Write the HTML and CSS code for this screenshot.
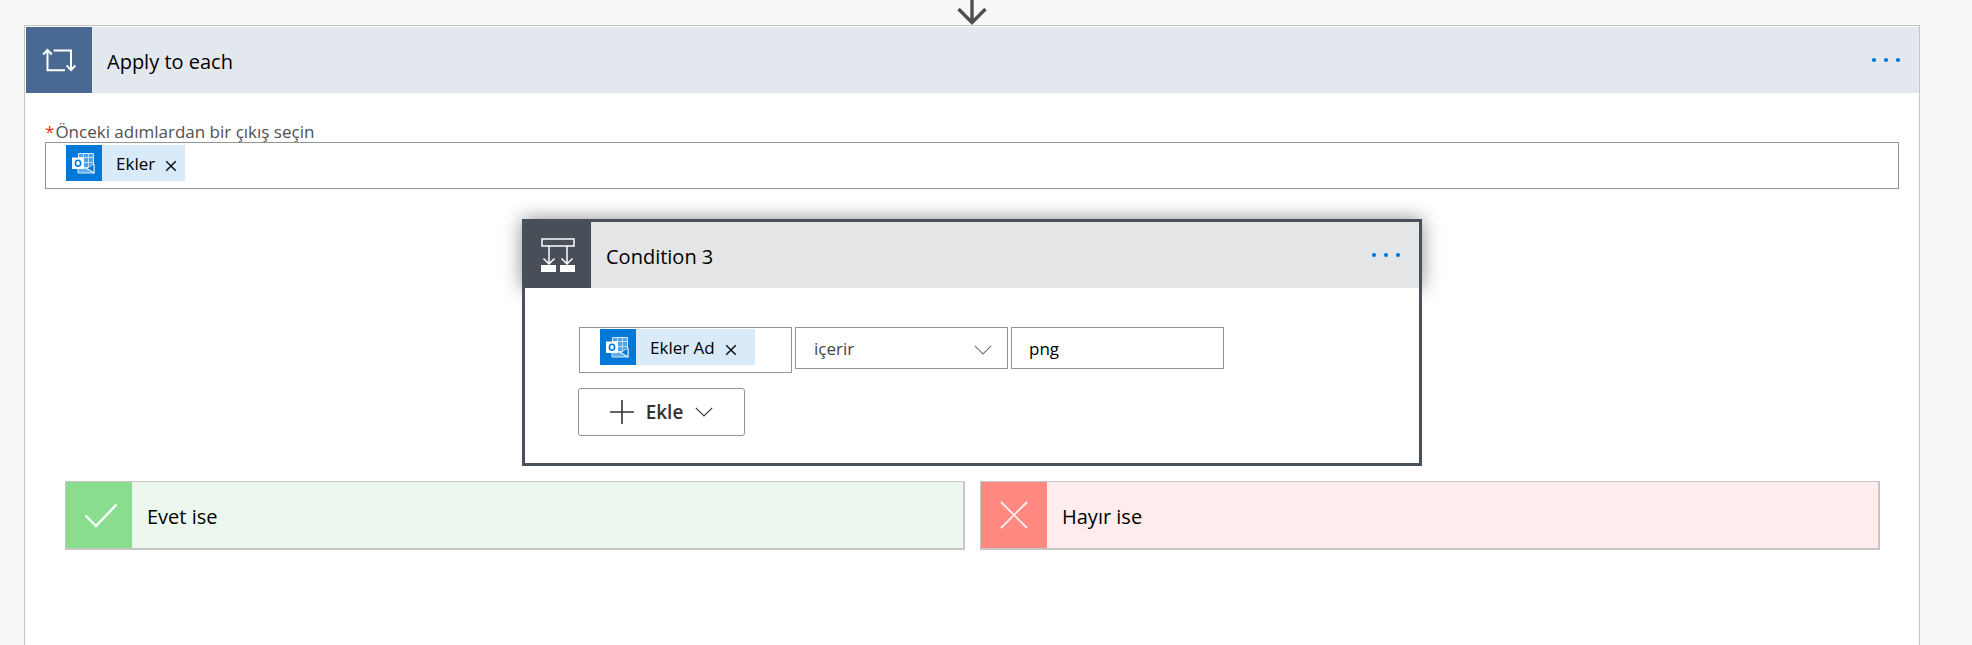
FILE: index.html
```html
<!DOCTYPE html>
<html lang="tr">
<head>
<meta charset="utf-8">
<title>Apply to each</title>
<link rel="stylesheet" href="styles.css">
</head>
<body>
<svg class="defs" aria-hidden="true">
  <symbol id="outlook" viewBox="0 0 36 36">
    <path d="M12.500 8.500h15v14h-15z" fill="#4fa3e6" stroke="#d6ebfb"/>
    <path d="M17.500 9v13M22.500 9v13M13 12.500h14M13 17.500h14" stroke="#b9dcf7" stroke-width="1"/>
    <path d="M12 19.500l8.500 4.500 7.500-5v9H12z" fill="#5fade9" stroke="#d6ebfb"/>
    <path d="M21.500 23.500l6.500-4v7.500z" fill="#0078d7"/>
    <path d="M19 22.500l9 5.500V19" fill="none" stroke="#d6ebfb" stroke-width="1.100"/>
    <path d="M6 12.500h12v11.500H6z" fill="#fff"/>
    <ellipse cx="12" cy="18.200" rx="2.600" ry="3" fill="none" stroke="#0078d7" stroke-width="1.600"/>
  </symbol>
  <symbol id="chevron" viewBox="0 0 18 10">
    <path d="M.8.800L9 9 17.200.800" fill="none" stroke="currentColor" stroke-width="1.100"/>
  </symbol>
  <symbol id="remove" viewBox="0 0 12 12">
    <path d="M1.200 1.200l9.600 9.600M10.800 1.200l-9.600 9.600" stroke="#111" stroke-width="1.500"/>
  </symbol>
  <symbol id="dots" viewBox="0 0 30 6">
    <g fill="#0078d7"><circle cx="3" cy="3" r="2.100"/><circle cx="15" cy="3" r="2.100"/><circle cx="27" cy="3" r="2.100"/></g>
  </symbol>
</svg>
<div class="connector">
  <svg width="32" height="26" viewBox="0 0 32 26" fill="none" stroke="#505050" stroke-width="3.400" aria-hidden="true"><path d="M16 0v23M2.500 9L16 22.500 29.500 9"/></svg>
</div>
<main class="loop">
  <header class="bar loop-bar">
    <span class="tile loop-tile">
      <svg width="34" height="24" viewBox="0 0 34 24" fill="none" stroke="#fff" stroke-width="2" aria-hidden="true"><path d="M5.500 2v20.200H23M1.200 6.500l4.300-4.600 4.300 4.600M11.500 2.600H29v19.500M24.700 17.500l4.300 4.600 4.300-4.600"/></svg>
    </span>
    <h1 class="title">Apply to each</h1>
    <button class="more" aria-label="Menü"><svg width="30" height="6"><use href="#dots"/></svg></button>
  </header>
  <div class="loop-body">
    <label class="label" for="output"><span class="star">*</span>Önceki adımlardan bir çıkış seçin</label>
    <div class="field token-field">
      <span class="token"><svg class="token-icon" width="36" height="36"><use href="#outlook"/></svg><span class="token-text">Ekler</span><button class="remove" aria-label="Ekler kaldır"><svg width="12" height="12"><use href="#remove"/></svg></button></span>
      <input class="bare" id="output" type="text">
    </div>

    <section class="condition">
      <header class="bar condition-bar">
        <span class="tile condition-tile">
          <svg width="34" height="34" viewBox="0 0 34 34" fill="none" stroke="#fff" stroke-width="1.500" aria-hidden="true"><path d="M1 1h32v7H1zM8 8v18M26 8v18M2.500 20.500L8 26l5.500-5.500M20.500 20.500L26 26l5.500-5.500"/><path d="M0 27h15v7H0zM19 27h15v7H19z" fill="#fff" stroke="none"/></svg>
        </span>
        <h2 class="title">Condition 3</h2>
        <button class="more" aria-label="Menü"><svg width="30" height="6"><use href="#dots"/></svg></button>
      </header>
      <div class="condition-body">
        <div class="operands">
          <div class="field token-field operand">
            <span class="token token-wide"><svg class="token-icon" width="36" height="36"><use href="#outlook"/></svg><span class="token-text">Ekler Ad</span><button class="remove" aria-label="Ekler Ad kaldır"><svg width="12" height="12"><use href="#remove"/></svg></button></span>
            <input class="bare" type="text" aria-label="Değer">
          </div>
          <div class="operand select-wrap">
            <select class="field control" aria-label="İşleç"><option>içerir</option></select>
            <svg class="select-chevron" width="18" height="10"><use href="#chevron"/></svg>
          </div>
          <input class="field control operand" type="text" value="png" aria-label="Karşılaştırma değeri">
        </div>
        <button class="add">
          <svg width="24" height="24" viewBox="0 0 24 24" stroke="#333" stroke-width="1.600" aria-hidden="true"><path d="M12 0v24M0 12h24"/></svg>
          <span>Ekle</span>
          <svg width="18" height="10"><use href="#chevron"/></svg>
        </button>
      </div>
    </section>

    <div class="branches">
      <section class="branch yes">
        <span class="tile yes-tile"><svg width="34" height="26" viewBox="0 0 34 26" fill="none" stroke="#fff" stroke-width="2.400" aria-hidden="true"><path d="M1.500 13.500L12 24 32.500 2.500"/></svg></span>
        <h2 class="title">Evet ise</h2>
      </section>
      <section class="branch no">
        <span class="tile no-tile"><svg width="28" height="28" viewBox="0 0 28 28" fill="none" stroke="#ffecec" stroke-width="1.900" aria-hidden="true"><path d="M1 1l26 26M27 1L1 27"/></svg></span>
        <h2 class="title">Hayır ise</h2>
      </section>
    </div>
  </div>
</main>
</body>
</html>
```
FILE: styles.css
```css
* {
  box-sizing: border-box;
}

body {
  margin: 0;
  min-height: 100vh;
  display: flex;
  flex-direction: column;
  background: #f8f8f8;
  color: #000;
  font: 17px/24px "Open Sans", "Noto Sans", sans-serif;
}

button,
input,
select {
  font: inherit;
  color: inherit;
}

button {
  padding: 0;
  border: 0;
  background: none;
  cursor: pointer;
}

svg {
  display: block;
  flex: none;
}

.defs {
  position: absolute;
  width: 0;
  height: 0;
}

.connector {
  display: flex;
  justify-content: center;
  height: 25px;
  margin-right: 28px;
}

.loop {
  position: relative;
  z-index: 0;
  flex: 1;
  margin: 0 52px 0 24px;
  padding: 1px 0 0 1px;
  border: 1px solid #c3c5c3;
  border-bottom: 0;
  background: #fff;
}

.bar {
  display: flex;
  align-items: center;
  height: 66px;
}

.loop-bar {
  background: #e3e8ef;
}

.tile {
  display: flex;
  align-items: center;
  justify-content: center;
  flex: none;
  width: 66px;
  height: 66px;
}

.loop-tile {
  background: #486991;
}

.title {
  flex: 1;
  margin: 0;
  padding: 4px 0 0 15px;
  font-size: 20px;
  line-height: 28px;
  font-weight: 400;
}

.more {
  padding: 10px 18px;
}

.loop-body {
  padding: 27px 20px 0 19px;
}

.label {
  display: block;
  height: 22px;
  line-height: 24px;
  color: #505050;
}

.star {
  padding-right: 1px;
  color: #f03020;
}

.field {
  border: 1px solid #949494;
  border-radius: 0;
  background: #fff;
}

.token-field {
  display: flex;
  height: 47px;
  padding: 2px 20px 0;
}

.token {
  display: flex;
  align-items: center;
  flex: none;
  width: 119px;
  height: 36px;
  background: #d9eaf9;
}

.token-wide {
  width: 155px;
}

.token-icon {
  background: #0078d7;
}

.token-text {
  padding: 2px 0 0 14px;
}

.remove {
  padding: 6px 0 0 10px;
}

.bare {
  flex: 1;
  min-width: 0;
  height: 36px;
  padding: 0;
  border: 0;
  outline: 0;
  background: none;
}

.condition {
  position: relative;
  max-width: 900px;
  margin: 30px auto 15px;
  border: 3px solid #47505b;
  background: #fff;
}

/* Shadow only behind the header strip */
.condition::before {
  content: "";
  position: absolute;
  inset: -3px -3px auto;
  height: 69px;
  box-shadow: 0 0 18px rgba(0, 0, 0, 0.45);
  z-index: -1;
}

.condition-bar {
  background: #e3e5e6;
}

.condition-tile {
  background: #484f59;
}

.condition-body {
  padding: 39px 53px 27px;
}

.operands {
  display: flex;
  align-items: flex-start;
  gap: 3px;
  margin-left: 1px;
}

.operand {
  flex: 0 1 213px;
  min-width: 0;
}

.operands .token-field {
  height: 46px;
  padding-top: 1px;
}

.select-wrap {
  position: relative;
}

.control {
  height: 42px;
  padding: 0 17px;
}

select.control {
  display: block;
  width: 100%;
  padding: 2px 18px 0;
  appearance: none;
  color: #444;
}

.select-chevron {
  position: absolute;
  right: 16px;
  top: 18px;
  color: #6b7785;
  pointer-events: none;
}

.add {
  display: flex;
  align-items: center;
  justify-content: center;
  gap: 12px;
  width: 167px;
  height: 48px;
  margin-top: 15px;
  border: 1px solid #949494;
  border-radius: 3px;
  color: #333;
  font-size: 19px;
  font-weight: 600;
}

.branches {
  display: grid;
  grid-template-columns: 1fr 1fr;
  gap: 15px;
  padding: 0 19px 0 20px;
}

.branch {
  display: flex;
  align-items: center;
  border: solid #c8c6c4;
  border-width: 1px 2px 2px 1px;
}

.yes {
  background: #ecf7ed;
}

.yes-tile {
  padding-left: 4px;
  background: #8adc8e;
}

.no {
  background: #ffecec;
}

.no-tile {
  background: #ff8880;
}
```
